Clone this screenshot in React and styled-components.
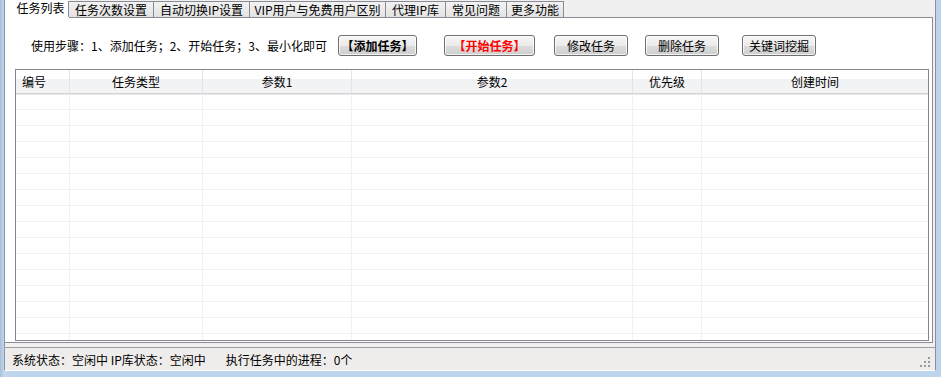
import React from "react";
import styled, { createGlobalStyle } from "styled-components";

const Global = createGlobalStyle`
  html, body { margin: 0; padding: 0; background: #bcd4ec; }
  body { font-family: "Noto Sans CJK SC", "DejaVu Sans", sans-serif; font-size: 12px; color: #000; }
  #root { width: 941px; height: 377px; overflow: hidden; }
`;

const Frame = styled.div`
  width: 941px;
  height: 377px;
  box-sizing: border-box;
  padding: 0 5px 6px 4px;
  background: linear-gradient(to right, #a9bfd6 0px, #c3d7ec 4px, #bcd4ec 20px);
  display: flex;
`;

const Client = styled.div`
  flex: 1;
  display: flex;
  flex-direction: column;
  background: #f0f0f0;
  border-left: 1px solid #8796a8;
  border-right: 1px solid #8e8f94;
  border-bottom: 1px solid #ffffff;
  min-width: 0;
`;

const TabStrip = styled.div`
  height: 17px;
  display: flex;
  align-items: flex-end;
  position: relative;
  z-index: 1;
`;

const Tab = styled.div`
  box-sizing: border-box;
  width: ${(p) => p.$w}px;
  height: ${(p) => (p.$active ? 18 : 16)}px;
  margin-bottom: ${(p) => (p.$active ? -1 : 0)}px;
  display: flex;
  align-items: center;
  justify-content: center;
  line-height: 1;
  white-space: nowrap;
  padding-bottom: ${(p) => (p.$active ? 3 : 0)}px;
  padding-left: ${(p) => (p.$active ? 7 : 0)}px;
  background: ${(p) =>
    p.$active ? "#ffffff" : "linear-gradient(#f2f2f2, #e3e3e3)"};
  border: 1px solid ${(p) => (p.$active ? "transparent" : "#898c95")};
  border-bottom: none;
  margin-left: ${(p) => (p.$active ? 0 : -1)}px;
  font-size: 12px;
`;

const Panel = styled.div`
  height: 326px;
  margin-right: 2px;
  background: #ffffff;
  border-top: 1px solid #898c95;
  border-right: 1px solid #898c95;
  border-bottom: 1px solid #898c95;
  box-sizing: border-box;
  display: flex;
  flex-direction: column;
  padding: 17px 3px 1px 10px;
`;

const Toolbar = styled.div`
  height: 21px;
  display: flex;
  align-items: center;
  padding-left: 16px;
`;

const Steps = styled.span`
  white-space: nowrap;
  font-size: 12px;
  width: 292px;
`;

const Button = styled.button`
  box-sizing: border-box;
  width: ${(p) => p.$w}px;
  height: 21px;
  margin-left: ${(p) => p.$ml}px;
  padding: 0;
  font-family: inherit;
  font-size: 12px;
  font-weight: ${(p) => (p.$bold ? 700 : 400)};
  color: ${(p) => p.$color || "#000"};
  border: 1px solid #707070;
  border-radius: 3px;
  background: linear-gradient(#f6f6f6 0%, #ebebeb 50%, #dddddd 51%, #cfcfcf 100%);
  box-shadow: inset 0 0 0 1px rgba(255, 255, 255, 0.7);
  white-space: nowrap;
  line-height: 1;
`;

const Table = styled.div`
  margin-top: 13px;
  flex: 1;
  border: 1px solid #828790;
  overflow: hidden;
  display: flex;
  flex-direction: column;
`;

const cols = [54, 133, 149, 281, 69, 225];

const HeaderRow = styled.div`
  height: 23px;
  display: flex;
  background: linear-gradient(#ffffff 0%, #ffffff 40%, #f1f2f4 41%, #f3f4f6 100%);
  border-bottom: 1px solid #d5d5d5;
  box-shadow: 0 1px 0 #e6e6e6;
  flex-shrink: 0;
`;

const HeadCell = styled.div`
  box-sizing: border-box;
  width: ${(p) => p.$w}px;
  flex-shrink: 0;
  display: flex;
  align-items: center;
  justify-content: ${(p) => (p.$left ? "flex-start" : "center")};
  padding-left: ${(p) => (p.$left ? 6 : 0)}px;
  border-right: 1px solid #e3e5e8;
  font-size: 12px;
  &:last-child { border-right: none; flex: 1; }
`;

const Row = styled.div`
  height: 16px;
  display: flex;
  flex-shrink: 0;
  border-bottom: 1px solid #f0f0f0;
  box-sizing: border-box;
  &:first-of-type { margin-top: 1px; }
`;

const Cell = styled.div`
  box-sizing: border-box;
  width: ${(p) => p.$w}px;
  flex-shrink: 0;
  border-right: 1px solid #f0f0f0;
  &:last-child { border-right: none; flex: 1; }
`;

const StatusBar = styled.div`
  margin-top: 4px;
  flex: 1;
  background: #efedeb;
  border-top: 1px solid #a0a0a0;
  display: flex;
  align-items: center;
  padding-left: 7px;
  position: relative;
  font-size: 12px;
  white-space: pre;
`;

const StatusItem = styled.span`
  margin-left: ${(p) => p.$ml || 0}px;
`;

const Grip = styled.svg`
  position: absolute;
  right: 4px;
  bottom: 2px;
`;

const tabs = [
  ["任务列表", 64, true],
  ["任务次数设置", 86],
  ["自动切换IP设置", 97],
  ["VIP用户与免费用户区别", 137],
  ["代理IP库", 61],
  ["常见问题", 62],
  ["更多功能", 58],
];

const headers = ["编号", "任务类型", "参数1", "参数2", "优先级", "创建时间"];

export default function App() {
  return (
    <>
      <Global />
      <Frame>
        <Client>
          <TabStrip>
            {tabs.map(([t, w, a]) => (
              <Tab key={t} $w={w} $active={a}>
                {t}
              </Tab>
            ))}
          </TabStrip>
          <Panel>
            <Toolbar>
              <Steps>使用步骤：1、添加任务；2、开始任务；3、最小化即可</Steps>
              <Button $w={79} $ml={15} $bold>
                【添加任务】
              </Button>
              <Button $w={91} $ml={27} $bold $color="#ff0000">
                【开始任务】
              </Button>
              <Button $w={74} $ml={19}>
                修改任务
              </Button>
              <Button $w={74} $ml={17}>
                删除任务
              </Button>
              <Button $w={74} $ml={23}>
                关键词挖掘
              </Button>
            </Toolbar>
            <Table>
              <HeaderRow>
                {headers.map((h, i) => (
                  <HeadCell key={h} $w={cols[i]} $left={i === 0}>
                    {h}
                  </HeadCell>
                ))}
              </HeaderRow>
              {Array.from({ length: 16 }).map((_, r) => (
                <Row key={r}>
                  {cols.map((w, i) => (
                    <Cell key={i} $w={w} />
                  ))}
                </Row>
              ))}
            </Table>
          </Panel>
          <StatusBar>
            <StatusItem>系统状态：空闲中 IP库状态：空闲中</StatusItem>
            <StatusItem $ml={20}>执行任务中的进程：0个</StatusItem>
            <Grip width="11" height="11" viewBox="0 0 11 11">
              {[
                [8, 0],
                [4, 4],
                [8, 4],
                [0, 8],
                [4, 8],
                [8, 8],
              ].map(([x, y]) => (
                <rect key={`${x}-${y}`} x={x} y={y} width="2" height="2" fill="#9a9a9a" />
              ))}
            </Grip>
          </StatusBar>
        </Client>
      </Frame>
    </>
  );
}
